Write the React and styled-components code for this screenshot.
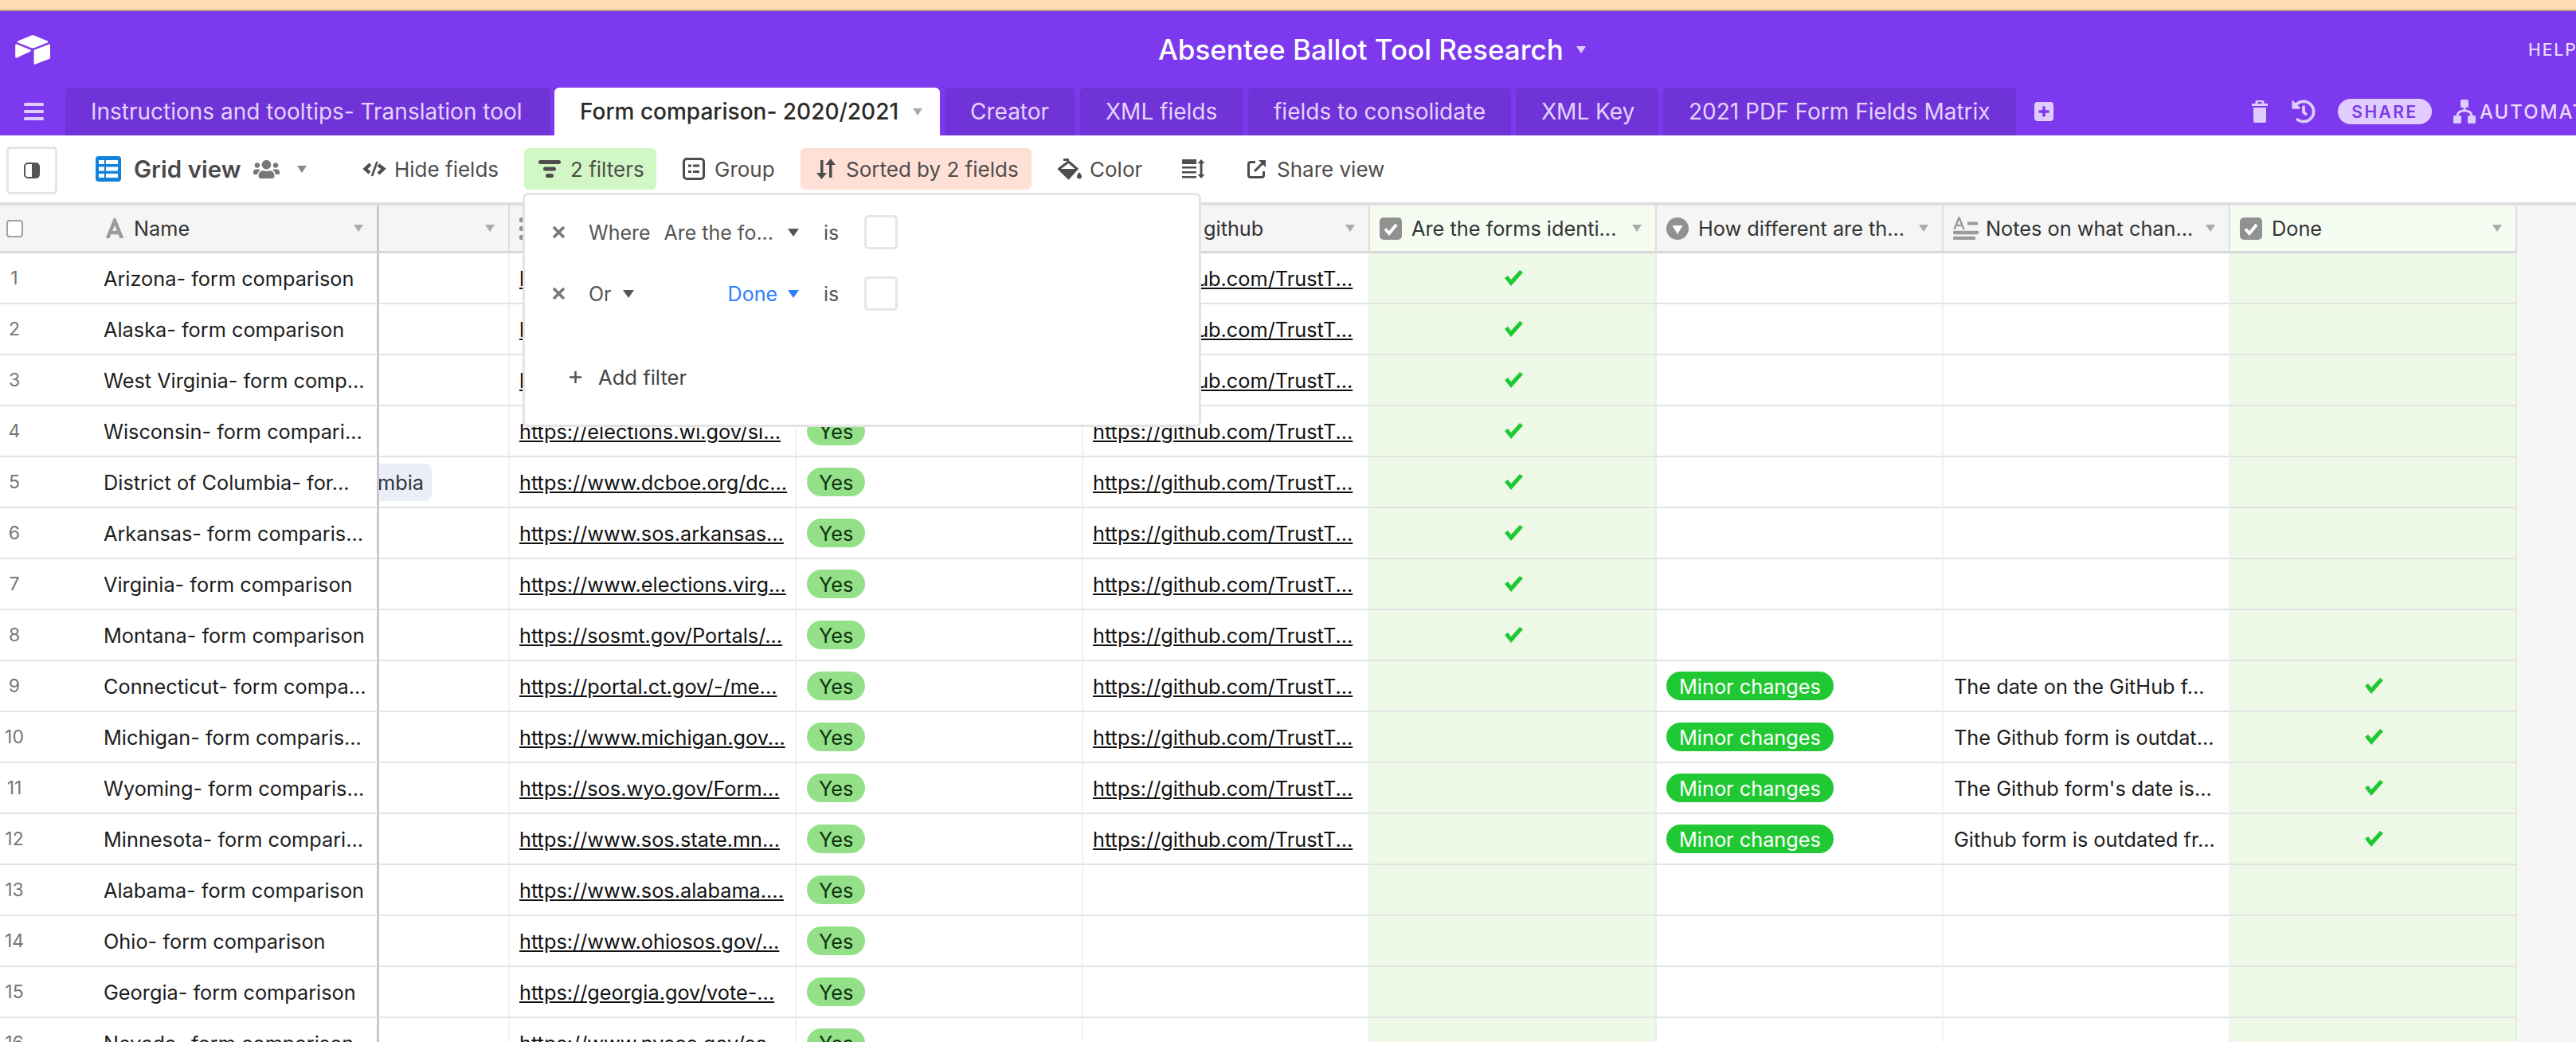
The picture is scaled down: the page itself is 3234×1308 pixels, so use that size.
import React from "react";
import styled, { createGlobalStyle } from "styled-components";
import { FaUsers, FaHistory } from "react-icons/fa";

const GlobalStyle = createGlobalStyle`
  html, body {
    margin: 0;
    padding: 0;
    height: 1308px;
    overflow: hidden;
    background: #f6f6f6;
    font-family: Inter, "Liberation Sans", sans-serif;
  }
`;

const COLUMNS = "476px 164px repeat(7, 360px) 1fr";

const Page = styled.div`
  position: relative;
  width: 3234px;
  height: 1308px;
  overflow: hidden;
`;

const TopStrip = styled.div`
  height: 12px;
  background: #ffdcb2;
  border-bottom: 2px solid #c2a181;
`;

const AppBar = styled.div`
  display: flex;
  align-items: center;
  height: 96px;
  background: #7c39ed;
  color: #fff;
  white-space: nowrap;
`;

const Logo = styled.svg`
  width: 46px;
  height: 39px;
  margin-left: 18px;
  flex-shrink: 0;
`;

const BaseTitle = styled.div`
  margin-left: 1390px;
  font-size: 35px;
  font-weight: 500;
  flex-shrink: 0;
`;

const Help = styled.div`
  margin-left: auto;
  width: 60px;
  overflow: hidden;
  font-size: 21px;
  font-weight: 500;
  letter-spacing: 2px;
  color: #e8dbff;
  flex-shrink: 0;
`;

const TabBar = styled.div`
  display: flex;
  align-items: stretch;
  height: 60px;
  background: #7c39ed;
  white-space: nowrap;
`;

const MenuButton = styled.div`
  width: 82px;
  display: flex;
  align-items: center;
  padding-left: 30px;
  box-sizing: border-box;
  color: #e0ccff;
`;

const Tab = styled.div`
  display: flex;
  align-items: center;
  box-sizing: border-box;
  width: ${(p) => p.$w}px;
  margin-right: ${(p) => p.$gap || 6}px;
  padding-left: 32px;
  border-radius: 6px 6px 0 0;
  font-size: 28px;
  font-weight: ${(p) => (p.$active ? 500 : 400)};
  background: ${(p) => (p.$active ? "#fff" : "#7033d8")};
  color: ${(p) => (p.$active ? "#2b2b2b" : "#e4d3ff")};
`;

const TabActions = styled.div`
  display: flex;
  align-items: center;
  color: #e0ccff;
  flex: 1;
  min-width: 0;
`;

const ActionIcon = styled.svg`
  margin-left: ${(p) => p.$ml}px;
  flex-shrink: 0;
`;

const HistoryIcon = styled(FaHistory)`
  margin-left: 30px;
  flex-shrink: 0;
`;

const SharePill = styled.div`
  display: flex;
  align-items: center;
  justify-content: center;
  width: 118px;
  height: 32px;
  margin-left: 28px;
  border-radius: 16px;
  background: #e0ccff;
  color: #7c39ed;
  font-size: 21px;
  font-weight: 600;
  letter-spacing: 2.5px;
  flex-shrink: 0;
`;

const AutomationLabel = styled.div`
  margin-left: 5px;
  font-size: 24px;
  font-weight: 500;
  letter-spacing: 2px;
  color: #e8dbff;
  flex-shrink: 0;
`;

const Toolbar = styled.div`
  display: flex;
  align-items: center;
  height: 84px;
  padding-left: 8px;
  background: #fff;
  color: #4d4d4d;
  white-space: nowrap;
`;

const SidebarToggle = styled.div`
  display: flex;
  align-items: center;
  justify-content: center;
  box-sizing: border-box;
  width: 64px;
  height: 60px;
  margin-top: 4px;
  border: 3px solid #e6e6e6;
  border-radius: 5px;
`;

const ViewSwitcher = styled.div`
  display: flex;
  align-items: center;
  width: 335px;
  margin-left: 48px;
  color: #4a4a4a;
`;

const ViewName = styled.div`
  margin: 0 16px;
  font-size: 29.5px;
  font-weight: 600;
`;

const ToolIcon = styled.svg`
  flex-shrink: 0;
`;

const ToolItem = styled.div`
  display: flex;
  align-items: center;
  box-sizing: border-box;
  gap: ${(p) => p.$gap || 12}px;
  width: ${(p) => p.$w}px;
  height: 52px;
  padding-left: ${(p) => p.$pad || 0}px;
  border-radius: 6px;
  font-size: 26px;
  background: ${(p) => p.$bg || "transparent"};
`;

const GridWrap = styled.div`
  border-top: 4px solid #dedede;
`;

const GridRow = styled.div`
  display: grid;
  grid-template-columns: ${COLUMNS};
  height: ${(p) => (p.$header ? 60 : 64)}px;
`;

const HeaderCell = styled.div`
  display: flex;
  align-items: center;
  gap: ${(p) => p.$gap || 12}px;
  box-sizing: border-box;
  padding: 0 17px 0 12px;
  overflow: hidden;
  white-space: nowrap;
  font-size: 25.3px;
  color: #333;
  background: ${(p) => (p.$green ? "#f5fcf2" : "#f5f5f5")};
  border-right: ${(p) => (p.$frozen ? "3px solid #c9c9c9" : "2px solid #dcdcdc")};
  border-bottom: 3px solid #d8d8d8;
`;

const HeaderLabel = styled.span`
  flex: 1;
  min-width: 0;
  padding-left: ${(p) => p.$pad || 0}px;
`;

const NameHeader = styled(HeaderCell)`
  padding-left: 8px;
  gap: 0;
`;

const Filler = styled.div`
  background: #f6f6f6;
`;

const Caret = styled.span`
  flex-shrink: 0;
  width: 0;
  height: 0;
  margin-left: ${(p) => p.$ml || 0}px;
  border-left: ${(p) => p.$size || 6}px solid transparent;
  border-right: ${(p) => p.$size || 6}px solid transparent;
  border-top: ${(p) => (p.$size || 6) + 3}px solid ${(p) => p.$color || "#aaa"};
`;

const Checkbox = styled.span`
  display: block;
  box-sizing: border-box;
  width: 21px;
  height: 22px;
  margin-right: 104px;
  border: 2px solid #97a0ad;
  border-radius: 4px;
  background: #fff;
  flex-shrink: 0;
`;

const Cell = styled.div`
  display: flex;
  align-items: center;
  box-sizing: border-box;
  padding: 0 12px 0 13px;
  overflow: hidden;
  white-space: nowrap;
  font-size: 25.3px;
  color: #1d1d1d;
  background: ${(p) => (p.$green ? "#edf9e6" : "#fff")};
  border-right: 2px solid ${(p) => (p.$green ? "#e4f0de" : "#f1f1f1")};
  border-bottom: 2px solid #e2e3e3;
`;

const NameCell = styled(Cell)`
  padding: 0;
  border-right: 3px solid #c9c9c9;
`;

const RowNumber = styled.span`
  width: 36px;
  margin-right: 94px;
  text-align: center;
  font-size: 23px;
  color: #767676;
  flex-shrink: 0;
`;

const ClippedCell = styled(Cell)`
  justify-content: flex-end;
  padding: 0 96px 0 0;
`;

const LinkedRecord = styled.span`
  flex-shrink: 0;
  padding: 8px 10px;
  border-radius: 8px;
  background: #e9eef9;
  color: #333;
`;

const UrlText = styled.span`
  margin-left: -1px;
  color: #111;
  text-decoration: underline;
`;

const Pill = styled.span`
  display: flex;
  align-items: center;
  height: 36px;
  margin-left: ${(p) => (p.$strong ? -1 : 0)}px;
  padding: 0 ${(p) => (p.$strong ? 16 : 15)}px;
  border-radius: 18px;
  background: ${(p) => (p.$strong ? "#20c933" : "#93e088")};
  color: ${(p) => (p.$strong ? "#fff" : "#0f300f")};
`;

const CheckMark = styled.svg`
  display: block;
  width: 24px;
  height: 20px;
  margin: 0 auto;
  color: #20c933;
`;

const FilterPopover = styled.div`
  position: absolute;
  left: 656px;
  top: 242px;
  box-sizing: border-box;
  width: 852px;
  height: 294px;
  padding: 25px 0 0 34px;
  border: 3px solid #e4e4e4;
  border-radius: 7px;
  background: #fff;
  font-size: 25px;
  color: #555;
  white-space: nowrap;
`;

const FilterRow = styled.div`
  display: grid;
  grid-template-columns: 46px 95px 169px 31px 51px 42px;
  align-items: center;
  height: 43px;
  margin-bottom: 34px;
`;

const RemoveIcon = styled.svg`
  width: 17px;
  height: 17px;
  color: #777;
`;

const Conjunction = styled.div`
  display: flex;
  align-items: center;
  gap: 14px;
`;

const FieldSelect = styled.div`
  grid-column: 3;
  display: flex;
  align-items: center;
  justify-content: flex-end;
  gap: ${(p) => p.$gap}px;
  color: ${(p) => p.$color || "#555"};
`;

const IsLabel = styled.div`
  grid-column: 5;
`;

const FilterCheck = styled.div`
  box-sizing: border-box;
  width: 42px;
  height: 43px;
  border: 3px solid #e6e6e6;
  border-radius: 5px;
`;

const AddFilter = styled.div`
  display: flex;
  align-items: center;
  gap: 21px;
  height: 44px;
  margin-top: 61px;
  padding-left: 22px;
  font-size: 25.6px;
  color: #444;
`;

const AirtableLogo = () => (
  <Logo viewBox="6 6 186 156" fill="#fff">
    <path d="M90 12.4 24.1 39.7c-3.7 1.5-3.6 6.7.1 8.2l66.2 26.2c5.8 2.3 12.3 2.3 18.1 0l66.2-26.2c3.7-1.5 3.7-6.7.1-8.2L108.8 12.4c-6-2.5-12.8-2.5-18.8 0" />
    <path d="M105.3 88.5v65.6c0 3.1 3.1 5.3 6 4.1l73.9-28.7c1.7-.7 2.8-2.3 2.8-4.1V59.8c0-3.1-3.1-5.3-6-4.1l-73.9 28.7c-1.7.6-2.8 2.2-2.8 4.1" />
    <path d="M88.1 91.8 66.2 102.4l-2.2 1.1-46.3 22.2c-2.9 1.4-6.7-.7-6.7-4V60.1c0-1.2.6-2.2 1.4-3 .3-.3.7-.6 1.1-.8 1.1-.7 2.7-.8 4-.3l70.1 27.8c3.6 1.4 3.9 6.4.5 8" />
  </Logo>
);

const MenuIcon = () => (
  <svg width="26" height="22" viewBox="0 0 26 22" fill="currentColor">
    <rect y="0" width="25" height="4" rx="1.5" />
    <rect y="9" width="25" height="4" rx="1.5" />
    <rect y="18" width="25" height="4" rx="1.5" />
  </svg>
);

const PlusIcon = () => (
  <ActionIcon $ml={17} width="24" height="24" viewBox="0 0 24 24">
    <rect width="24" height="24" rx="4" fill="#e0ccff" />
    <path d="M12 5.5v13M5.5 12h13" stroke="#7c39ed" strokeWidth="3.4" />
  </ActionIcon>
);

const TrashIcon = () => (
  <ActionIcon $ml={249} width="20" height="28" viewBox="0 0 20 28" fill="currentColor">
    <path d="M6 0h8a1.5 1.5 0 0 1 1.5 1.5V4H20v3H0V4h4.5V1.5A1.5 1.5 0 0 1 6 0zm1.4 2v2h5.2V2z" />
    <path d="M2 9h16v16.5a2.5 2.5 0 0 1-2.5 2.5h-11A2.5 2.5 0 0 1 2 25.5z" />
  </ActionIcon>
);

const AutomationIcon = () => (
  <ActionIcon $ml={27} width="28" height="30" viewBox="0 0 28 30" fill="currentColor">
    <rect x="9" y="0" width="10" height="10" rx="1.5" />
    <rect x="0" y="20" width="10" height="10" rx="1.5" />
    <rect x="18" y="20" width="10" height="10" rx="1.5" />
    <path d="M14 8v6M5 21c0-5 4-7 9-7s9 2 9 7" fill="none" stroke="currentColor" strokeWidth="3" />
  </ActionIcon>
);

const SidebarIcon = () => (
  <svg width="20" height="20" viewBox="0 0 20 20">
    <rect x="1" y="1" width="18" height="18" rx="4" fill="#fff" stroke="#555" strokeWidth="2" />
    <path d="M10 1h5a4 4 0 0 1 4 4v10a4 4 0 0 1-4 4h-5z" fill="#555" />
  </svg>
);

const GridIcon = () => (
  <ToolIcon width="32" height="32" viewBox="0 0 32 32">
    <rect width="32" height="32" rx="4" fill="#1283da" />
    <path d="M4 5h7v5H4zM13 5h15v5H13zM4 13.5h7v5H4zM13 13.5h15v5H13zM4 22h7v5H4zM13 22h15v5H13z" fill="#fff" />
  </ToolIcon>
);

const HideIcon = () => (
  <ToolIcon width="30" height="20" viewBox="0 0 30 20" fill="none" stroke="currentColor" strokeWidth="4.2">
    <path d="M10 4 3.5 10 9 15" />
    <path d="M20 5l6.5 5-6.5 6" />
    <path d="M18.5 1 12 19" strokeWidth="2.6" />
  </ToolIcon>
);

const FilterIcon = () => (
  <ToolIcon width="28" height="22" viewBox="0 0 28 22" fill="currentColor">
    <rect width="28" height="5" rx="2.5" />
    <rect x="6" y="8.5" width="16" height="5" rx="2.5" />
    <rect x="9" y="17" width="10" height="5" rx="2.5" />
  </ToolIcon>
);

const GroupIcon = () => (
  <ToolIcon width="28" height="28" viewBox="0 0 28 28">
    <rect x="1.5" y="1.5" width="25" height="25" rx="3.5" fill="none" stroke="currentColor" strokeWidth="3" />
    <path d="M7 8.5h4v3H7zM13 8.5h8v3h-8zM7 16h4v3H7zM13 16h8v3h-8z" fill="currentColor" />
  </ToolIcon>
);

const SortIcon = () => (
  <ToolIcon width="25" height="26" viewBox="0 0 25 26" fill="currentColor">
    <path d="M5 2h3.5v16H13l-6.5 8L0 18h5z" />
    <path d="M16 24h3.5V8H24L17.8 0 11.5 8H16z" />
  </ToolIcon>
);

const ColorIcon = () => (
  <ToolIcon width="30" height="28" viewBox="0 0 30 28">
    <path d="M7 2.5h7M13.5 5 24 14 13.5 25.5 1.500 14z" fill="none" stroke="currentColor" strokeWidth="3" />
    <path d="M1.500 14H24L13.500 26z" fill="currentColor" />
    <path d="M27 18c1.500 2.300 3 4 3 5.500a3 3 0 0 1-6 0c0-1.500 1.500-3.200 3-5.500z" fill="currentColor" />
  </ToolIcon>
);

const RowHeightIcon = () => (
  <ToolIcon width="29" height="24" viewBox="0 0 29 24" fill="currentColor">
    <rect width="18" height="6" />
    <rect y="9" width="18" height="2.5" />
    <rect y="15" width="18" height="2.5" />
    <rect y="21" width="18" height="2.5" />
    <path d="M24 0l4.500 5h-3v14h3L24 24l-4.500-5h3V5h-3z" />
  </ToolIcon>
);

const ShareIcon = () => (
  <ToolIcon width="24" height="24" viewBox="0 0 24 24" fill="none" stroke="currentColor" strokeWidth="3">
    <path d="M10 3.500H4a2.500 2.500 0 0 0-2.500 2.500v14A2.500 2.500 0 0 0 4 22.500h14a2.500 2.500 0 0 0 2.500-2.500v-5" />
    <path d="M9 15 21 3" />
    <path d="M14 1h9v9z" fill="currentColor" stroke="none" />
  </ToolIcon>
);

const LetterIcon = () => (
  <ToolIcon width="22" height="25" viewBox="0 0 22 25" fill="none" stroke="#9b9b9b" strokeWidth="4.5">
    <path d="M2 25 11 3l9 22M5 18h12" />
  </ToolIcon>
);

const UrlStubIcon = () => (
  <ToolIcon width="8" height="28" viewBox="0 0 8 28" fill="#8e8e8e">
    <rect width="8" height="6" rx="2" />
    <rect y="11" width="8" height="6" rx="2" />
    <rect y="22" width="8" height="6" rx="2" />
  </ToolIcon>
);

const CheckFieldIcon = () => (
  <ToolIcon width="28" height="28" viewBox="0 0 28 28">
    <rect width="28" height="28" rx="5" fill="#919191" />
    <path d="M7 14.500l5 5.500 9-11" fill="none" stroke="#fff" strokeWidth="4" />
  </ToolIcon>
);

const SelectFieldIcon = () => (
  <ToolIcon width="28" height="28" viewBox="0 0 28 28">
    <circle cx="14" cy="14" r="14" fill="#919191" />
    <path d="M7.500 10h13L14 21z" fill="#fff" />
  </ToolIcon>
);

const LongTextIcon = () => (
  <ToolIcon width="32" height="29" viewBox="0 0 32 29" fill="none" stroke="#9b9b9b">
    <path d="M1.500 16 7.500 1 13.500 16M4 11h7" strokeWidth="2.4" />
    <path d="M18 8.500h13" strokeWidth="4" />
    <path d="M2 20h28M2 27h24" strokeWidth="4.4" strokeLinecap="round" />
  </ToolIcon>
);

const GreenCheck = () => (
  <CheckMark viewBox="0 0 24 20" fill="currentColor">
    <path d="M1 10 5 7l4 5L20 0l4 3L9 20z" />
  </CheckMark>
);

const XIcon = () => (
  <RemoveIcon viewBox="0 0 17 17" fill="none" stroke="currentColor" strokeWidth="3.5">
    <path d="M2 2l13 13M15 2 2 15" />
  </RemoveIcon>
);

const githubUrl = "https://github.com/TrustT...";

const rows = [
  { name: "Arizona- form comparison", url: "https://", same: true },
  { name: "Alaska- form comparison", url: "https://", same: true },
  { name: "West Virginia- form comp...", url: "https://", same: true },
  { name: "Wisconsin- form compari...", url: "https://elections.wi.gov/si...", same: true },
  { name: "District of Columbia- for...", url: "https://www.dcboe.org/dc...", same: true, record: "District of Columbia" },
  { name: "Arkansas- form comparis...", url: "https://www.sos.arkansas...", same: true },
  { name: "Virginia- form comparison", url: "https://www.elections.virg...", same: true },
  { name: "Montana- form comparison", url: "https://sosmt.gov/Portals/...", same: true },
  { name: "Connecticut- form compa...", url: "https://portal.ct.gov/-/me...", note: "The date on the GitHub f..." },
  { name: "Michigan- form comparis...", url: "https://www.michigan.gov...", note: "The Github form is outdat..." },
  { name: "Wyoming- form comparis...", url: "https://sos.wyo.gov/Form...", note: "The Github form's date is..." },
  { name: "Minnesota- form compari...", url: "https://www.sos.state.mn...", note: "Github form is outdated fr..." },
  { name: "Alabama- form comparison", url: "https://www.sos.alabama...." },
  { name: "Ohio- form comparison", url: "https://www.ohiosos.gov/..." },
  { name: "Georgia- form comparison", url: "https://georgia.gov/vote-..." },
  { name: "Nevada- form comparison", url: "https://www.nvsos.gov/so..." },
];

const tabs = [
  { label: "Instructions and tooltips- Translation tool", w: 609, gap: 5 },
  { label: "Form comparison- 2020/2021", w: 484, active: true },
  { label: "Creator", w: 164 },
  { label: "XML fields", w: 205 },
  { label: "fields to consolidate", w: 330 },
  { label: "XML Key", w: 179 },
  { label: "2021 PDF Form Fields Matrix", w: 443 },
];

const App = () => {
  return (
    <Page>
      <GlobalStyle />
      <TopStrip />
      <AppBar>
        <AirtableLogo />
        <BaseTitle>Absentee Ballot Tool Research</BaseTitle>
        <Caret $size={6} $ml={16} $color="#e0ccff" />
        <Help>HELP</Help>
      </AppBar>
      <TabBar>
        <MenuButton>
          <MenuIcon />
        </MenuButton>
        {tabs.map((tab) => (
          <Tab key={tab.label} $w={tab.w} $gap={tab.gap} $active={tab.active}>
            {tab.label}
            {tab.active && <Caret $size={6} $ml={18} />}
          </Tab>
        ))}
        <TabActions>
          <PlusIcon />
          <TrashIcon />
          <HistoryIcon size={30} />
          <SharePill>SHARE</SharePill>
          <AutomationIcon />
          <AutomationLabel>AUTOMATIONS</AutomationLabel>
        </TabActions>
      </TabBar>
      <Toolbar>
        <SidebarToggle>
          <SidebarIcon />
        </SidebarToggle>
        <ViewSwitcher>
          <GridIcon />
          <ViewName>Grid view</ViewName>
          <FaUsers size={33} color="#777" />
          <Caret $size={6} $ml={22} $color="#888" />
        </ViewSwitcher>
        <ToolItem $w={203} $gap={10}>
          <HideIcon />
          Hide fields
        </ToolItem>
        <ToolItem $w={166} $pad={18} $bg="#d1f7c4">
          <FilterIcon />2 filters
        </ToolItem>
        <ToolItem $w={181} $pad={33}>
          <GroupIcon />
          Group
        </ToolItem>
        <ToolItem $w={290} $pad={20} $bg="#ffe0d6">
          <SortIcon />
          Sorted by 2 fields
        </ToolItem>
        <ToolItem $w={189} $pad={33} $gap={10}>
          <ColorIcon />
          Color
        </ToolItem>
        <ToolItem $w={82}>
          <RowHeightIcon />
        </ToolItem>
        <ToolItem $w={200} $gap={13}>
          <ShareIcon />
          Share view
        </ToolItem>
      </Toolbar>
      <GridWrap>
        <GridRow $header>
          <NameHeader $frozen>
            <Checkbox />
            <LetterIcon />
            <HeaderLabel $pad={13}>Name</HeaderLabel>
            <Caret />
          </NameHeader>
          <HeaderCell>
            <HeaderLabel />
            <Caret />
          </HeaderCell>
          <HeaderCell>
            <UrlStubIcon />
          </HeaderCell>
          <HeaderCell />
          <HeaderCell>
            <HeaderLabel $pad={139}>github</HeaderLabel>
            <Caret />
          </HeaderCell>
          <HeaderCell $green>
            <CheckFieldIcon />
            <HeaderLabel>Are the forms identi...</HeaderLabel>
            <Caret />
          </HeaderCell>
          <HeaderCell>
            <SelectFieldIcon />
            <HeaderLabel>How different are th...</HeaderLabel>
            <Caret />
          </HeaderCell>
          <HeaderCell $gap={9}>
            <LongTextIcon />
            <HeaderLabel>Notes on what chan...</HeaderLabel>
            <Caret />
          </HeaderCell>
          <HeaderCell $green>
            <CheckFieldIcon />
            <HeaderLabel>Done</HeaderLabel>
            <Caret />
          </HeaderCell>
          <Filler />
        </GridRow>
        {rows.map((row, i) => (
          <GridRow key={row.name}>
            <NameCell>
              <RowNumber>{i + 1}</RowNumber>
              {row.name}
            </NameCell>
            {row.record ? (
              <ClippedCell>
                <LinkedRecord>{row.record}</LinkedRecord>
              </ClippedCell>
            ) : (
              <Cell />
            )}
            <Cell>
              <UrlText>{row.url}</UrlText>
            </Cell>
            <Cell>
              <Pill>Yes</Pill>
            </Cell>
            <Cell>{(row.same || row.note) && <UrlText>{githubUrl}</UrlText>}</Cell>
            <Cell $green>{row.same && <GreenCheck />}</Cell>
            <Cell>{row.note && <Pill $strong>Minor changes</Pill>}</Cell>
            <Cell>{row.note}</Cell>
            <Cell $green>{row.note && <GreenCheck />}</Cell>
            <Filler />
          </GridRow>
        ))}
      </GridWrap>
      <FilterPopover>
        <FilterRow>
          <XIcon />
          <div>Where</div>
          <FieldSelect $gap={18}>
            Are the fo...
            <Caret $size={7} $color="#555" />
          </FieldSelect>
          <IsLabel>is</IsLabel>
          <FilterCheck />
        </FilterRow>
        <FilterRow>
          <XIcon />
          <Conjunction>
            Or
            <Caret $size={7} $color="#555" />
          </Conjunction>
          <FieldSelect $gap={13} $color="#2d7ff9">
            Done
            <Caret $size={7} $color="#2d7ff9" />
          </FieldSelect>
          <IsLabel>is</IsLabel>
          <FilterCheck />
        </FilterRow>
        <AddFilter>
          <svg width="15" height="15" viewBox="0 0 15 15" stroke="#555" strokeWidth="2.5">
            <path d="M7.5 0v15M0 7.5h15" />
          </svg>
          Add filter
        </AddFilter>
      </FilterPopover>
    </Page>
  );
};

export default App;
